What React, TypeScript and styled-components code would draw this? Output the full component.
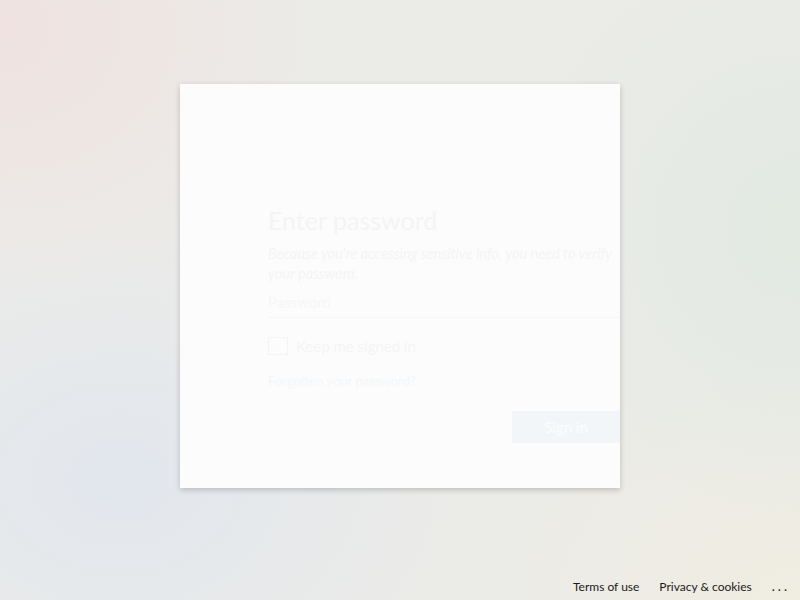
import React from "react";
import styled, { createGlobalStyle } from "styled-components";

const Global = createGlobalStyle`
  html, body { margin: 0; padding: 0; height: 100%; }
  body {
    font-family: Lato, "Open Sans", "Liberation Sans", sans-serif;
    color: #1b1b1b;
    overflow: hidden;
  }
  #root { height: 100%; }
`;

const Page = styled.div`
  position: relative;
  width: 800px;
  height: 600px;
  display: flex;
  flex-direction: column;
  align-items: center;
  background:
    radial-gradient(ellipse 320px 260px at 0% 5%, rgba(240, 226, 224, 0.95), rgba(240, 226, 224, 0) 100%),
    radial-gradient(ellipse 300px 300px at 100% 38%, rgba(226, 234, 226, 0.95), rgba(226, 234, 226, 0) 100%),
    radial-gradient(ellipse 340px 260px at 15% 80%, rgba(226, 231, 238, 0.95), rgba(226, 231, 238, 0) 100%),
    radial-gradient(ellipse 320px 240px at 100% 100%, rgba(240, 237, 224, 0.95), rgba(240, 237, 224, 0) 100%),
    #ebebe8;
`;

const Card = styled.div`
  margin-top: 84px;
  width: 440px;
  height: 404px;
  box-sizing: border-box;
  padding: 44px;
  background: rgba(254, 254, 254, 0.9);
  box-shadow: 0 2px 6px rgba(0, 0, 0, 0.2);
  overflow: hidden;
  position: relative;
`;

const Pane = styled.div`
  display: flex;
  flex-direction: column;
  width: 352px;
  transform: translateX(44px);
  opacity: 0.03;
  padding-top: 78px;
`;

const Title = styled.div`
  font-size: 25px;
  font-weight: 400;
  line-height: 28px;
  color: #1b1b1b;
`;

const Desc = styled.div`
  margin-top: 10px;
  font-size: 14.5px;
  font-style: italic;
  line-height: 20px;
  color: #1b1b1b;
`;

const Field = styled.div`
  margin-top: 2px;
  height: 31px;
  border-bottom: 1px solid #666;
  display: flex;
  align-items: center;
  font-size: 15px;
  color: #666;
`;

const CheckRow = styled.div`
  margin-top: 18px;
  height: 20px;
  display: flex;
  align-items: center;
  gap: 8px;
  font-size: 15px;
`;

const Box = styled.span`
  width: 20px;
  height: 18px;
  border: 1px solid #333;
  box-sizing: border-box;
`;

const Link = styled.div`
  margin-top: 17px;
  font-size: 13px;
  line-height: 16px;
  color: #0067b8;
`;

const Actions = styled.div`
  margin-top: 22px;
  display: flex;
  justify-content: flex-end;
`;

const Button = styled.div`
  width: 108px;
  height: 32px;
  background: #0067b8;
  color: #fff;
  font-size: 15px;
  display: flex;
  align-items: center;
  justify-content: center;
`;

const Footer = styled.div`
  position: absolute;
  right: 0;
  bottom: 0;
  height: 28px;
  display: flex;
  align-items: center;
  gap: 20px;
  padding-right: 10px;
  font-size: 12px;
  color: #1b1b1b;
`;

const More = styled.span`
  letter-spacing: 3px;
  font-size: 13px;
`;

export default function App() {
  return (
    <Page>
      <Global />
      <Card>
        <Pane>
          <Title>Enter password</Title>
          <Desc>Because you're accessing sensitive info, you need to verify your password.</Desc>
          <Field>Password</Field>
          <CheckRow>
            <Box />
            <span>Keep me signed in</span>
          </CheckRow>
          <Link>Forgotten your password?</Link>
          <Actions>
            <Button>Sign in</Button>
          </Actions>
        </Pane>
      </Card>
      <Footer>
        <span>Terms of use</span>
        <span>Privacy &amp; cookies</span>
        <More>...</More>
      </Footer>
    </Page>
  );
}
